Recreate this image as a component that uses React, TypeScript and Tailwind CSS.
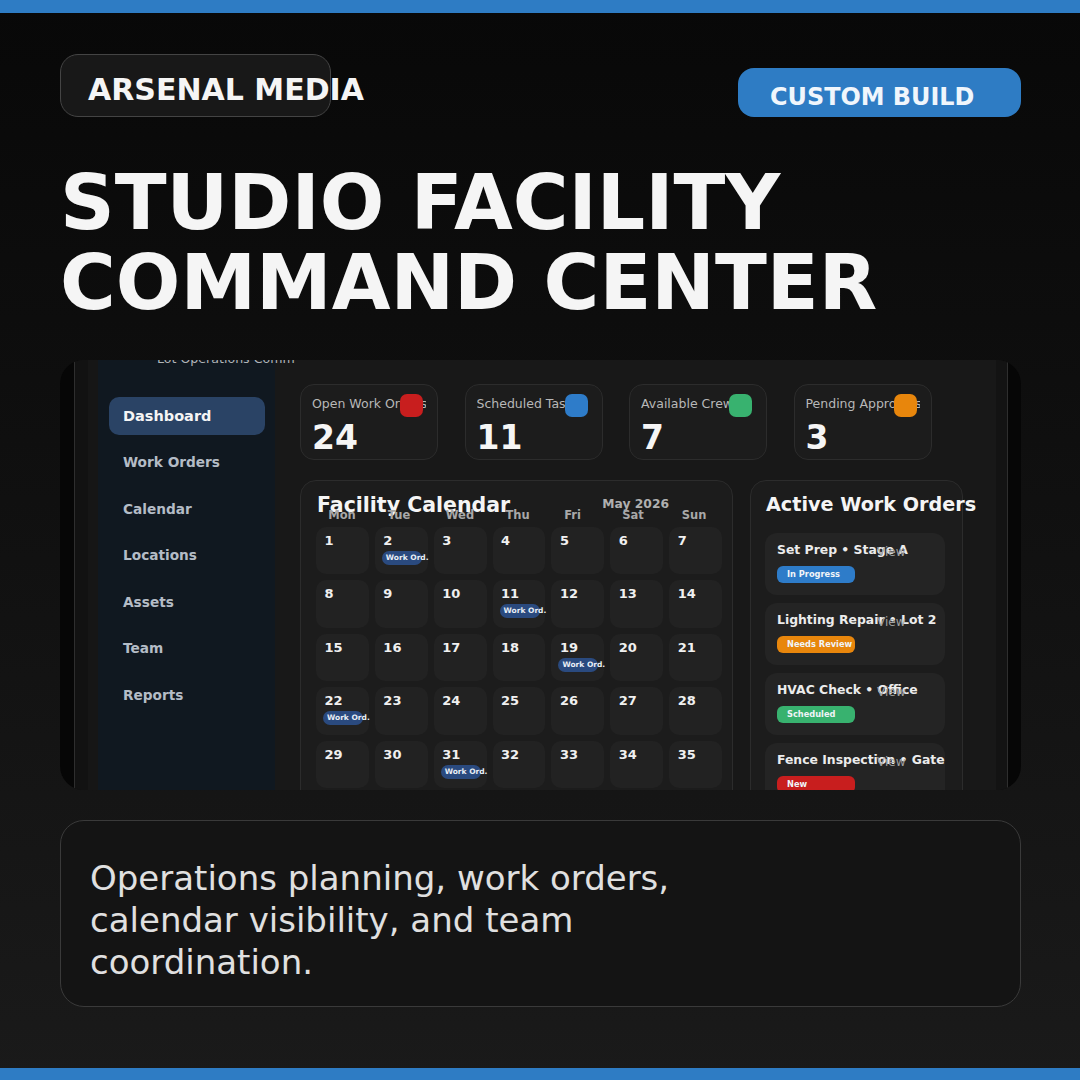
import React from 'react';

const navItems = ['Dashboard', 'Work Orders', 'Calendar', 'Locations', 'Assets', 'Team', 'Reports'];

const stats = [
  { label: 'Open Work Orders', value: '24', swatch: 'bg-[#c81e1e]' },
  { label: 'Scheduled Tasks', value: '11', swatch: 'bg-[#2e7cc9]' },
  { label: 'Available Crew', value: '7', swatch: 'bg-[#38b26f]' },
  { label: 'Pending Approvals', value: '3', swatch: 'bg-[#e8860c]' },
];

const weekDays = ['Mon', 'Tue', 'Wed', 'Thu', 'Fri', 'Sat', 'Sun'];
const days = Array.from({ length: 35 }, (_, i) => i + 1);
const badgeDays = [2, 11, 19, 22, 31];

const orders = [
  { title: 'Set Prep • Stage A', status: 'In Progress', color: 'bg-[#2e7cc9]' },
  { title: 'Lighting Repair • Lot 2', status: 'Needs Review', color: 'bg-[#e8860c]' },
  { title: 'HVAC Check • Office', status: 'Scheduled', color: 'bg-[#38b26f]' },
  { title: 'Fence Inspection • Gate', status: 'New', color: 'bg-[#c81e1e]' },
];

function Sidebar() {
  return (
    <aside className="w-[177px] shrink-0 bg-[#101820] pl-[11px] pr-[10px]">
      <div className="-mt-[9px] ml-[48px] w-[138px] h-[16px] overflow-hidden whitespace-nowrap text-[12.6px] leading-[16px] text-[#b0b4b8]">
        Lot Operations Command
      </div>
      <nav className="mt-[30px] flex flex-col gap-[9px]">
        {navItems.map((item, i) => (
          <div
            key={item}
            className={`px-[14px] rounded-[10px] flex items-center font-bold ${
              i === 0 ? 'h-[38px] pt-[1px] bg-[#2a4365] text-[#f5f5f5] text-[14.5px]' : 'h-[37.5px] text-[#b4bcc6] text-[13.7px]'
            }`}
          >
            {item}
          </div>
        ))}
      </nav>
    </aside>
  );
}

function StatCard({ label, value, swatch }: { label: string; value: string; swatch: string }) {
  return (
    <div className="relative w-[138px] h-[76px] rounded-[14px] border border-[#2c2c2c] bg-[#1c1c1c] px-[11px] pt-[11px] whitespace-nowrap">
      <div className="text-[12.5px] leading-[16px] text-[#b8b8b8] overflow-hidden">{label}</div>
      <div className="mt-[6px] text-[33px] leading-[40px] font-bold text-[#f5f5f5]">{value}</div>
      <div className={`absolute left-[99px] top-[9px] w-[23px] h-[23px] rounded-[7px] ${swatch}`} />
    </div>
  );
}

function CalendarPanel() {
  return (
    <section className="w-[433px] h-[330px] shrink-0 rounded-[16px] border border-[#2c2c2c] bg-[#1c1c1c] px-[15px] pt-[12px]">
      <div className="h-[24px] flex justify-between items-center whitespace-nowrap">
        <h2 className="ml-[1px] text-[20.5px] font-bold text-[#f5f5f5]">Facility Calendar</h2>
        <span className="mr-[48px] -mt-[1px] text-[12.3px] font-bold text-[#b0b0b0]">May 2026</span>
      </div>
      <div className="grid grid-cols-[52px_62px_60px_55px_55px_66px_56px] w-[406px] -mt-[8px]">
        {weekDays.map((d) => (
          <div key={d} className="h-[12px] leading-[12px] text-center text-[11.5px] font-bold text-[#a8a8a8]">
            {d}
          </div>
        ))}
      </div>
      <div className="grid grid-cols-7 gap-[6px] w-[406px] mt-[6px]">
        {days.map((d) => (
          <div key={d} className="h-[47.4px] rounded-[10px] bg-[#222222] pl-[8.5px] pt-[6px]">
            <div className="text-[13px] leading-[16px] font-bold text-[#f0f0f0]">{d}</div>
            {badgeDays.includes(d) && (
              <div className="mt-[2px] -ml-[1.5px] w-[40px] h-[14px] rounded-[7px] bg-[#2a4a7f] pl-[4px] text-[7.5px] leading-[14px] font-bold text-[#e8eef5] whitespace-nowrap">
                Work Ord.
              </div>
            )}
          </div>
        ))}
      </div>
    </section>
  );
}

function OrdersPanel() {
  return (
    <section className="w-[213px] h-[330px] shrink-0 rounded-[16px] border border-[#2c2c2c] bg-[#1c1c1c] pl-[14px] pr-[15px] pt-[12px]">
      <h2 className="ml-[1px] h-[24px] leading-[24px] text-[19.2px] font-bold text-[#f5f5f5] whitespace-nowrap">Active Work Orders</h2>
      <div className="mt-[16px] flex flex-col gap-[8px]">
        {orders.map((o) => (
          <div key={o.title} className="relative h-[62px] w-[180px] rounded-[12px] bg-[#242424] px-[12px] pt-[9px] whitespace-nowrap">
            <div className="text-[12.4px] leading-[16px] font-bold text-[#ececec]">{o.title}</div>
            <div className={`mt-[8px] w-[78px] h-[17px] rounded-[6px] pl-[10px] text-[8.25px] leading-[17px] font-bold text-[#f0f4f8] ${o.color}`}>
              {o.status}
            </div>
            <span className="absolute left-[112px] top-[11px] text-[12px] leading-[16px] text-[#a0a0a0]">View</span>
          </div>
        ))}
      </div>
    </section>
  );
}

export default function App() {
  return (
    <div className="w-[1080px] h-[1080px] overflow-hidden flex flex-col bg-gradient-to-b from-[#080808] to-[#1a1a1a] font-['DejaVu_Sans',sans-serif]">
      <div className="h-[13px] shrink-0 bg-[#2e7cc4]" />

      <div className="flex-1 min-h-0 pl-[60px] pt-[41px]">
        {/* Header */}
        <header className="w-[961px] flex justify-between items-start">
          <div className="w-[271px] h-[63px] rounded-[18px] border border-[#444] bg-[#181818] pl-[27px] pt-[8px] flex items-center whitespace-nowrap text-[30px] font-bold text-[#f5f5f5]">
            ARSENAL MEDIA
          </div>
          <div className="mt-[14px] w-[283px] h-[49px] rounded-[16px] bg-[#2e7cc4] pl-[32px] pt-[10px] flex items-center whitespace-nowrap text-[23.9px] font-bold text-[#f0f6fc]">
            CUSTOM BUILD
          </div>
        </header>

        <h1 className="mt-[46px] text-[76px] leading-[80px] font-bold text-[#f5f5f5] whitespace-nowrap">
          STUDIO FACILITY
          <br />
          COMMAND CENTER
        </h1>

        {/* App screenshot */}
        <div className="mt-[37px] w-[961px] h-[430px] rounded-[24px] overflow-hidden flex bg-[#060606]">
          <div className="w-[14px] shrink-0 border-r border-[#2e2e2e] box-content" />
          <div className="flex-1 min-w-0 flex bg-[#181818]">
            <div className="w-[13px] shrink-0 bg-[#121212]" />
            <div className="w-[10px] shrink-0 bg-[#161616]" />
            <Sidebar />
            <main className="flex-1 min-w-0 pl-[25px] pt-[24px]">
              <div className="flex gap-[26.5px]">
                {stats.map((s) => (
                  <StatCard key={s.label} {...s} />
                ))}
              </div>
              <div className="mt-[20px] flex gap-[17px]">
                <CalendarPanel />
                <OrdersPanel />
              </div>
            </main>
            <div className="w-[11px] shrink-0 bg-[#131313]" />
          </div>
          <div className="w-[13px] shrink-0 border-l border-[#2e2e2e] box-content" />
        </div>

        {/* Summary */}
        <div className="mt-[30px] w-[961px] h-[187px] rounded-[24px] border border-[#3a3a3a] bg-[#141414] px-[29px] pt-[36px]">
          <p className="w-[640px] text-[34px] leading-[42px] text-[#e0e0e0]">
            Operations planning, work orders, calendar visibility, and team coordination.
          </p>
        </div>
      </div>

      <div className="h-[12px] shrink-0 bg-[#2e7cc4]" />
    </div>
  );
}
